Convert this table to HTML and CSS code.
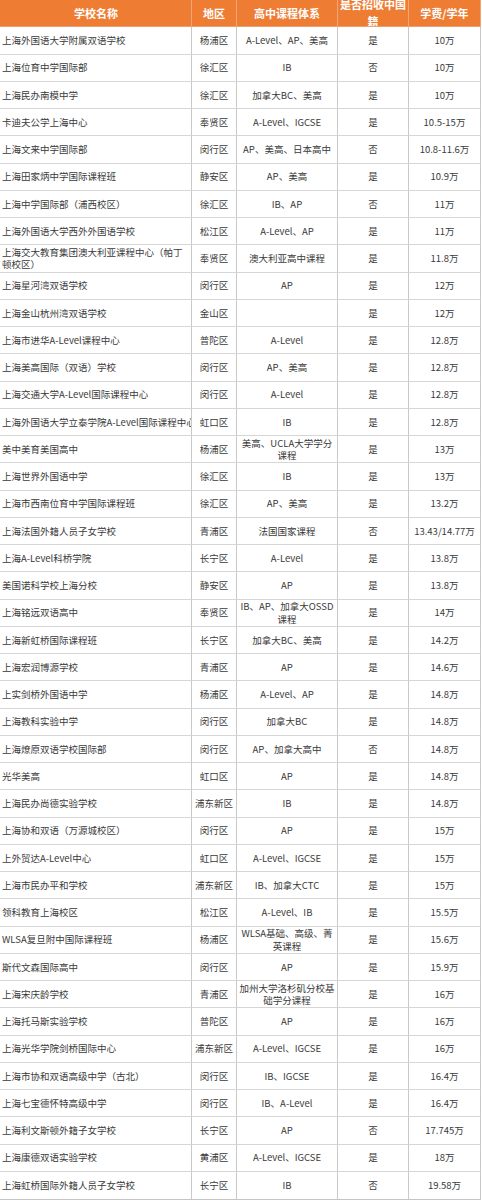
FILE: index.html
```html
<!DOCTYPE html>
<html lang="zh">
<head>
<meta charset="utf-8">
<title>上海国际学校学费</title>
<link rel="stylesheet" href="styles.css">
</head>
<body>
<div class="table">
  <div class="row head">
    <div class="c name">学校名称</div><div class="c">地区</div><div class="c">高中课程体系</div><div class="c tall">是否招收中国籍</div><div class="c">学费/学年</div>
  </div>
  <div class="row"><div class="c name">上海外国语大学附属双语学校</div><div class="c">杨浦区</div><div class="c">A-Level、AP、美高</div><div class="c">是</div><div class="c">10万</div></div>
  <div class="row"><div class="c name">上海位育中学国际部</div><div class="c">徐汇区</div><div class="c">IB</div><div class="c">否</div><div class="c">10万</div></div>
  <div class="row"><div class="c name">上海民办南模中学</div><div class="c">徐汇区</div><div class="c">加拿大BC、美高</div><div class="c">是</div><div class="c">10万</div></div>
  <div class="row"><div class="c name">卡迪夫公学上海中心</div><div class="c">奉贤区</div><div class="c">A-Level、IGCSE</div><div class="c">是</div><div class="c">10.5-15万</div></div>
  <div class="row"><div class="c name">上海文来中学国际部</div><div class="c">闵行区</div><div class="c">AP、美高、日本高中</div><div class="c">否</div><div class="c">10.8-11.6万</div></div>
  <div class="row"><div class="c name">上海田家炳中学国际课程班</div><div class="c">静安区</div><div class="c">AP、美高</div><div class="c">是</div><div class="c">10.9万</div></div>
  <div class="row"><div class="c name">上海中学国际部（浦西校区）</div><div class="c">徐汇区</div><div class="c">IB、AP</div><div class="c">否</div><div class="c">11万</div></div>
  <div class="row"><div class="c name">上海外国语大学西外外国语学校</div><div class="c">松江区</div><div class="c">A-Level、AP</div><div class="c">是</div><div class="c">11万</div></div>
  <div class="row"><div class="c name">上海交大教育集团澳大利亚课程中心（帕丁<br>顿校区）</div><div class="c">奉贤区</div><div class="c">澳大利亚高中课程</div><div class="c">是</div><div class="c">11.8万</div></div>
  <div class="row"><div class="c name">上海星河湾双语学校</div><div class="c">闵行区</div><div class="c">AP</div><div class="c">是</div><div class="c">12万</div></div>
  <div class="row"><div class="c name">上海金山杭州湾双语学校</div><div class="c">金山区</div><div class="c"></div><div class="c">是</div><div class="c">12万</div></div>
  <div class="row"><div class="c name">上海市进华A-Level课程中心</div><div class="c">普陀区</div><div class="c">A-Level</div><div class="c">是</div><div class="c">12.8万</div></div>
  <div class="row"><div class="c name">上海美高国际（双语）学校</div><div class="c">闵行区</div><div class="c">AP、美高</div><div class="c">是</div><div class="c">12.8万</div></div>
  <div class="row"><div class="c name">上海交通大学A-Level国际课程中心</div><div class="c">闵行区</div><div class="c">A-Level</div><div class="c">是</div><div class="c">12.8万</div></div>
  <div class="row"><div class="c name clip">上海外国语大学立泰学院A-Level国际课程中心</div><div class="c">虹口区</div><div class="c">IB</div><div class="c">是</div><div class="c">12.8万</div></div>
  <div class="row"><div class="c name">美中美育美国高中</div><div class="c">杨浦区</div><div class="c">美高、UCLA大学学分<br>课程</div><div class="c">是</div><div class="c">13万</div></div>
  <div class="row"><div class="c name">上海世界外国语中学</div><div class="c">徐汇区</div><div class="c">IB</div><div class="c">是</div><div class="c">13万</div></div>
  <div class="row"><div class="c name">上海市西南位育中学国际课程班</div><div class="c">徐汇区</div><div class="c">AP、美高</div><div class="c">是</div><div class="c">13.2万</div></div>
  <div class="row"><div class="c name">上海法国外籍人员子女学校</div><div class="c">青浦区</div><div class="c">法国国家课程</div><div class="c">否</div><div class="c">13.43/14.77万</div></div>
  <div class="row"><div class="c name">上海A-Level科桥学院</div><div class="c">长宁区</div><div class="c">A-Level</div><div class="c">是</div><div class="c">13.8万</div></div>
  <div class="row"><div class="c name">美国诺科学校上海分校</div><div class="c">静安区</div><div class="c">AP</div><div class="c">是</div><div class="c">13.8万</div></div>
  <div class="row"><div class="c name">上海铭远双语高中</div><div class="c">奉贤区</div><div class="c">IB、AP、加拿大OSSD<br>课程</div><div class="c">是</div><div class="c">14万</div></div>
  <div class="row"><div class="c name">上海新虹桥国际课程班</div><div class="c">长宁区</div><div class="c">加拿大BC、美高</div><div class="c">是</div><div class="c">14.2万</div></div>
  <div class="row"><div class="c name">上海宏润博源学校</div><div class="c">青浦区</div><div class="c">AP</div><div class="c">是</div><div class="c">14.6万</div></div>
  <div class="row"><div class="c name">上实剑桥外国语中学</div><div class="c">杨浦区</div><div class="c">A-Level、AP</div><div class="c">是</div><div class="c">14.8万</div></div>
  <div class="row"><div class="c name">上海教科实验中学</div><div class="c">闵行区</div><div class="c">加拿大BC</div><div class="c">是</div><div class="c">14.8万</div></div>
  <div class="row"><div class="c name">上海燎原双语学校国际部</div><div class="c">闵行区</div><div class="c">AP、加拿大高中</div><div class="c">否</div><div class="c">14.8万</div></div>
  <div class="row"><div class="c name">光华美高</div><div class="c">虹口区</div><div class="c">AP</div><div class="c">是</div><div class="c">14.8万</div></div>
  <div class="row"><div class="c name">上海民办尚德实验学校</div><div class="c">浦东新区</div><div class="c">IB</div><div class="c">是</div><div class="c">14.8万</div></div>
  <div class="row"><div class="c name">上海协和双语（万源城校区）</div><div class="c">闵行区</div><div class="c">AP</div><div class="c">是</div><div class="c">15万</div></div>
  <div class="row"><div class="c name">上外贸达A-Level中心</div><div class="c">虹口区</div><div class="c">A-Level、IGCSE</div><div class="c">是</div><div class="c">15万</div></div>
  <div class="row"><div class="c name">上海市民办平和学校</div><div class="c">浦东新区</div><div class="c">IB、加拿大CTC</div><div class="c">是</div><div class="c">15万</div></div>
  <div class="row"><div class="c name">领科教育上海校区</div><div class="c">松江区</div><div class="c">A-Level、IB</div><div class="c">是</div><div class="c">15.5万</div></div>
  <div class="row"><div class="c name">WLSA复旦附中国际课程班</div><div class="c">杨浦区</div><div class="c">WLSA基础、高级、菁<br>英课程</div><div class="c">是</div><div class="c">15.6万</div></div>
  <div class="row"><div class="c name">斯代文森国际高中</div><div class="c">闵行区</div><div class="c">AP</div><div class="c">是</div><div class="c">15.9万</div></div>
  <div class="row"><div class="c name">上海宋庆龄学校</div><div class="c">青浦区</div><div class="c">加州大学洛杉矶分校基<br>础学分课程</div><div class="c">是</div><div class="c">16万</div></div>
  <div class="row"><div class="c name">上海托马斯实验学校</div><div class="c">普陀区</div><div class="c">AP</div><div class="c">是</div><div class="c">16万</div></div>
  <div class="row"><div class="c name">上海光华学院剑桥国际中心</div><div class="c">浦东新区</div><div class="c">A-Level、IGCSE</div><div class="c">是</div><div class="c">16万</div></div>
  <div class="row"><div class="c name">上海市协和双语高级中学（古北）</div><div class="c">闵行区</div><div class="c">IB、IGCSE</div><div class="c">是</div><div class="c">16.4万</div></div>
  <div class="row"><div class="c name">上海七宝德怀特高级中学</div><div class="c">闵行区</div><div class="c">IB、A-Level</div><div class="c">是</div><div class="c">16.4万</div></div>
  <div class="row"><div class="c name">上海利文斯顿外籍子女学校</div><div class="c">长宁区</div><div class="c">AP</div><div class="c">否</div><div class="c">17.745万</div></div>
  <div class="row"><div class="c name">上海康德双语实验学校</div><div class="c">黄浦区</div><div class="c">A-Level、IGCSE</div><div class="c">是</div><div class="c">18万</div></div>
  <div class="row"><div class="c name">上海虹桥国际外籍人员子女学校</div><div class="c">长宁区</div><div class="c">IB</div><div class="c">否</div><div class="c">19.58万</div></div>
</div>
</body>
</html>
```
FILE: styles.css
```css
html, body {
  margin: 0;
  padding: 0;
  background: #ffffff;
}
body {
  font-family: "Noto Sans CJK SC", "Noto Sans", sans-serif;
  color: #3a3a3a;
  font-size: 9.5px;
}
.table {
  width: 481px;
  height: 1199px;
  display: flex;
  flex-direction: column;
  border-bottom: 1px solid #c4c4c4;
}
.row {
  flex: 1 1 0;
  min-height: 0;
  display: grid;
  grid-template-columns: 192px 45px 101px 71px 72px;
}
.c {
  box-sizing: border-box;
  display: flex;
  align-items: center;
  justify-content: center;
  text-align: center;
  border-right: 1px solid #c9c9c9;
  border-bottom: 1px solid #d6d6d6;
  line-height: 12.5px;
  overflow: hidden;
  padding: 0 1px;
}
.row:last-child .c {
  border-bottom: none;
}
.c.name {
  justify-content: flex-start;
  text-align: left;
  padding-left: 2px;
}
.c.clip {
  white-space: nowrap;
}
.head {
  background: #ee7d33;
}
.head .c {
  color: #ffffff;
  font-weight: bold;
  font-size: 11px;
  line-height: 17px;
  justify-content: center;
  border-right: 1px solid #f3a574;
  border-bottom: 1px solid #e6a276;
}
.head .c.name {
  justify-content: center;
  text-align: center;
}
.head .c.tall {
  padding: 0;
}
```
